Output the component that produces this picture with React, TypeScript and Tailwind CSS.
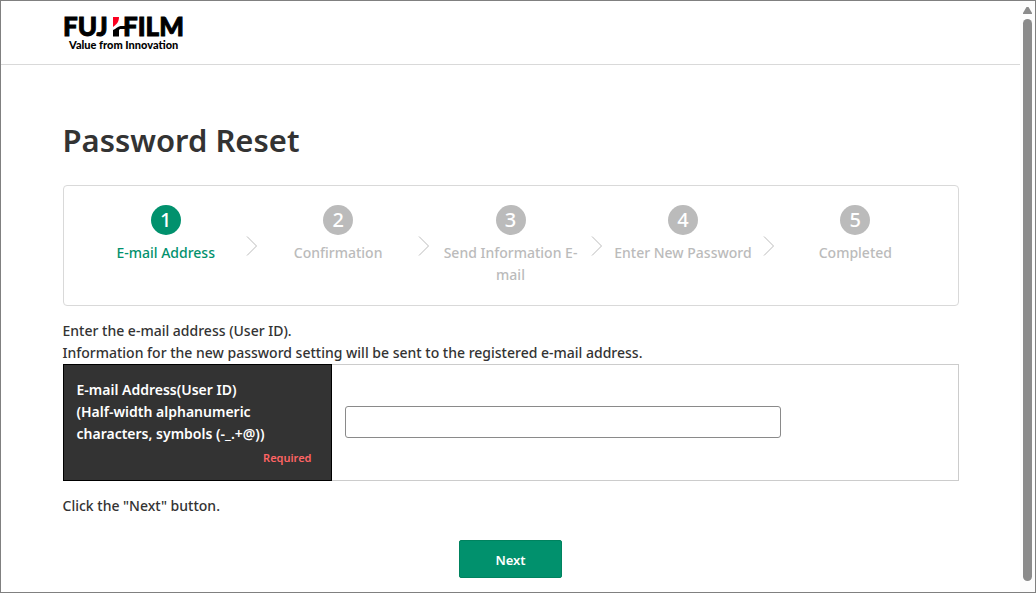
import { Fragment } from "react";

const steps = [
  "E-mail Address",
  "Confirmation",
  "Send Information E-mail",
  "Enter New Password",
  "Completed",
];

function Logo() {
  return (
    <a href="#" aria-label="FUJIFILM Value from Innovation" className="block w-[124px] text-black">
      <svg viewBox="0 0 124 48" className="block h-[48px] w-[124px]" fill="currentColor">
        <g fontFamily="Lato, sans-serif" fontWeight="900" fontSize="26" stroke="currentColor" strokeWidth="0.9">
          <text x="0" y="29">FUJ</text>
          <text x="60" y="29">FILM</text>
        </g>
        <path d="M50 10h6c0 5-2.500 7.500-6 10z" fill="#fb0020" />
        <path d="M50 23c3-1 4.500-3.500 7.500-4h5v3h-4.500c-1.300 0-2 .5-2 1.500v6h-6z" />
        <text x="6" y="42" fontFamily="Lato, sans-serif" fontWeight="900" fontSize="11">
          Value from Innovation
        </text>
      </svg>
    </a>
  );
}

function Chevron() {
  return (
    <svg viewBox="0 0 12 20" className="mt-[31px] -mx-[6px] h-5 w-3 shrink-0" fill="none" stroke="#bbbbbb">
      <path d="M1 0.5 10.5 10 1 19.5" />
    </svg>
  );
}

function Steps() {
  return (
    <ol className="mt-[25px] flex min-h-[121px] items-start rounded-[4px] border border-[#d9d9d9] px-4 pt-[19px]">
      {steps.map((label, i) => (
        <Fragment key={label}>
          {i > 0 && (
            <li aria-hidden="true" className="flex">
              <Chevron />
            </li>
          )}
          <li
            className={
              i === 0
                ? "flex flex-1 basis-0 flex-col items-center text-[#01916d]"
                : "flex flex-1 basis-0 flex-col items-center text-[#bbbbbb]"
            }
          >
            <span
              className={
                i === 0
                  ? "flex size-[30px] items-center justify-center rounded-full bg-[#01916d] text-xl font-medium text-white"
                  : "flex size-[30px] items-center justify-center rounded-full bg-[#bbbbbb] text-xl font-medium text-white"
              }
            >
              {i + 1}
            </span>
            <span className="mt-[7px] px-3 text-center font-medium">{label}</span>
          </li>
        </Fragment>
      ))}
    </ol>
  );
}

function ScrollRail() {
  return (
    <div aria-hidden="true" className="flex w-[15px] shrink-0 flex-col items-center bg-[#fcfcfc] pt-[5px] pb-[11px]">
      <svg viewBox="0 0 9 8" className="h-2 w-[9px] shrink-0" fill="#8b8b8b">
        <path d="M3.500 1h2L9 7v1H0V7z" />
      </svg>
      <div className="mt-[5px] w-[9px] flex-1 rounded-full bg-[#8b8b8b]" />
    </div>
  );
}

export default function App() {
  return (
    <div className="flex min-h-screen border border-[#808080] bg-white font-['Noto_Sans',sans-serif] text-[14px] leading-[22px] text-[#333333]">
      <div className="flex-1">
        <header className="border-b border-[#d9d9d9] pt-[6px] pb-[9px]">
          <div className="mx-auto max-w-[896px]">
            <Logo />
          </div>
        </header>
        <main className="mx-auto max-w-[896px] pt-[55px]">
          <h1 className="text-[31px] leading-10 font-semibold">Password Reset</h1>
          <Steps />
          <form onSubmit={(e) => e.preventDefault()}>
            <p className="mt-[14px] font-medium">
              Enter the e-mail address (User ID).
              <br />
              Information for the new password setting will be sent to the registered e-mail address.
            </p>
            <div className="flex border border-[#cccccc]">
              <div className="-my-px -ml-px min-h-[117px] w-[269px] border border-black bg-[#333333] px-[13px] pt-[14px] font-semibold text-white">
                <label htmlFor="email" className="block">
                  E-mail Address(User ID)
                  <br />
                  (Half-width alphanumeric characters, symbols (-_.+@))
                </label>
                <span className="mt-[2px] mr-[6px] block text-right text-[11px] text-[#ff6464]">Required</span>
              </div>
              <div className="flex flex-1 items-center px-[13px] pb-px">
                <input
                  id="email"
                  type="email"
                  className="h-8 w-[436px] rounded-[3px] border border-[#8a8a8a] bg-white px-2 outline-none"
                />
              </div>
            </div>
            <p className="mt-[14px] font-medium">Click the "Next" button.</p>
            <div className="mt-[23px] flex justify-center">
              <button
                type="submit"
                className="h-[38px] w-[103px] rounded-[2px] border border-[#00835f] bg-[#01916d] pt-px text-[13px] font-semibold text-white"
              >
                Next
              </button>
            </div>
          </form>
        </main>
      </div>
      <ScrollRail />
    </div>
  );
}
